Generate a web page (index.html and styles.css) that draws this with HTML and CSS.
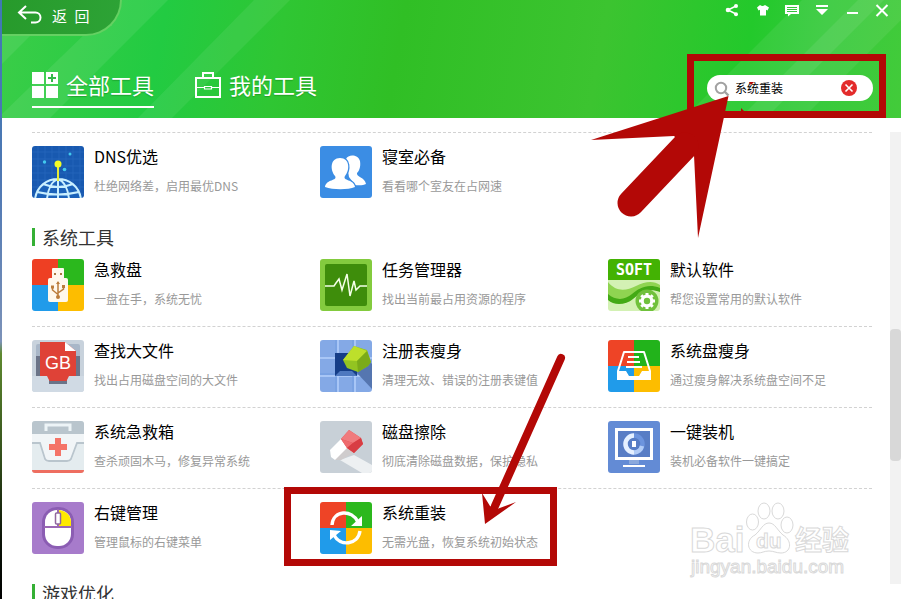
FILE: index.html
```html
<!DOCTYPE html>
<html lang="zh-CN">
<head>
<meta charset="utf-8">
<title>全部工具</title>
<link rel="stylesheet" href="styles.css">
</head>
<body>
<div class="desktop-edge"></div>
<div class="app">
  <header class="header">
    <svg class="streaks" viewBox="0 0 899 118" preserveAspectRatio="none" aria-hidden="true">
      <path d="M118 0H166L48 118H-2V116Z M0 64V30L24 4H60Z" fill="#fff" opacity=".08"/>
      <path d="M252 0H288L170 118H136Z" fill="#fff" opacity=".07"/>
      <path d="M800 0H899V20L801 118H682Z" fill="#fff" opacity=".07"/>
      <path d="M856 0H882L764 118H738Z" fill="#fff" opacity=".08"/>
    </svg>
    <div class="topbar">
      <button class="back" type="button">
        <svg width="26" height="20" viewBox="0 0 26 20" fill="none" stroke="#fff" stroke-width="2"><path d="M9 1L2 7.500l7 6.500M2.500 7.500H18.500a5 5 0 0 1 0 10H14"/></svg>
        <span>返&ensp;回</span>
      </button>
      <div class="controls">
        <button type="button" aria-label="分享"><svg width="14" height="14" viewBox="0 0 14 14"><path d="M11 3L3 7l8 4" fill="none" stroke="#fff" stroke-width="1.500"/><g fill="#fff"><circle cx="11" cy="3" r="2"/><circle cx="3" cy="7" r="2.300"/><circle cx="11" cy="11.200" r="2"/></g></svg></button>
        <button type="button" aria-label="换肤"><svg width="14" height="14" viewBox="0 0 14 14"><path d="M5 2Q7.500 4 10 2L14 4.500 12.500 7.500 11 6.800V12.500H5V6.800L3.500 7.500 2 4.500Z" fill="#fff"/></svg></button>
        <button type="button" aria-label="反馈"><svg width="14" height="14" viewBox="0 0 14 14"><path d="M0 2H14V11H6L3 13.500V11H0Z" fill="#fff"/><path d="M2 4.500H12M2 6.500H12M2 8.500H12" stroke="#35c43b"/></svg></button>
        <button type="button" aria-label="菜单"><svg width="14" height="14" viewBox="0 0 14 14"><path d="M1 2H13V4H1ZM1 6H13L7 12Z" fill="#fff"/></svg></button>
        <button type="button" aria-label="最小化"><svg width="14" height="14" viewBox="0 0 14 14"><path d="M2 9H13V11H2Z" fill="#fff"/></svg></button>
        <button type="button" aria-label="关闭"><svg width="14" height="14" viewBox="0 0 14 14"><path d="M1.500 2L12.500 13M12.500 2L1.500 13" stroke="#fff" stroke-width="2"/></svg></button>
      </div>
    </div>
    <div class="navbar">
      <nav class="tabs">
        <a class="tab active" href="#all">
          <svg width="26" height="26" viewBox="0 0 26 26"><path d="M0 0H12V12H0ZM14 0H26V12H14ZM0 14H12V26H0ZM14 14H26V26H14Z" fill="#fff"/><path d="M20 2V10M16 6H24" stroke="#35b84a" stroke-width="2"/></svg>
          全部工具
        </a>
        <a class="tab" href="#mine">
          <svg width="26" height="26" viewBox="0 0 26 26" fill="none" stroke="#fff" stroke-width="2"><path d="M1 6H25V25H1ZM8 6V1H18V6"/><path d="M1 15.500H10M16 15.500H25M9.500 14.500H16.500V17H9.500Z" stroke-width="1.200"/></svg>
          我的工具
        </a>
      </nav>
      <form class="search">
        <svg width="16" height="16" viewBox="0 0 16 16" fill="none" stroke="#a2a2a2"><circle cx="7" cy="8" r="5.200" stroke-width="2"/><path d="M11 12L14.500 15.500" stroke-width="2.400"/></svg>
        <input type="text" value="系统重装" aria-label="搜索工具">
        <button type="reset" aria-label="清除"><svg width="16" height="16" viewBox="0 0 16 16"><circle cx="8" cy="8" r="8" fill="#e32b2b"/><path d="M4.500 4.500L11.500 11.500M11.500 4.500L4.500 11.500" stroke="#fff" stroke-width="1.600"/></svg></button>
      </form>
    </div>
  </header>

  <div class="body">
    <main class="list">
      <section>
        <div class="row ruled">
          <a class="tool" href="#dns">
            <svg class="icon" viewBox="0 0 52 52">
              <rect width="52" height="52" fill="#1859b0"/>
              <path d="M6 0V52M13 0V52M20 0V52M27 0V52M34 0V52M41 0V52M48 0V52M0 6H52M0 13H52M0 20H52M0 27H52M0 34H52M0 41H52M0 48H52" stroke="#2767bd" stroke-width=".8"/>
              <path d="M3 53C5 40 15 33 26 33S47 40 49 53" fill="#1b62ba"/>
              <g fill="none" stroke="#c9efff" stroke-width="2"><path d="M3 53C5 40 15 33 26 33S47 40 49 53M15 53C16 43 20 35 26 33C32 35 36 43 37 53M26 33V52M11 38Q26 44 41 38M5 46Q26 51 47 46" /></g>
              <path d="M26 18V35" stroke="#e6ed36" stroke-width="2"/><circle cx="26" cy="18" r="3.500" fill="#f3fb25"/>
              <g fill="#42c9ee"><circle cx="12.500" cy="16" r="1.700"/><circle cx="38" cy="8" r="1.500"/><circle cx="32.500" cy="23.500" r="1.800"/></g>
            </svg>
            <span class="info"><b>DNS优选</b><small>杜绝网络差，启用最优DNS</small></span>
          </a>
          <a class="tool" href="#dorm">
            <svg class="icon" viewBox="0 0 52 52">
              <rect width="52" height="52" fill="#3b8de4"/>
              <g fill="#fff"><path d="M26 13C28 8 38 8 40 15C41 21 39 25 37 27C36 31 45 31 46 38C43 40 35 39 35 39L29 31Z"/><path d="M20 12C30 12 30 24 25 30C22 35 34 33 35 41C28 44 13 44 5 41C6 33 18 35 15 30C10 24 10 12 20 12Z" stroke="#3b8de4" stroke-width="2.400" paint-order="stroke"/></g>
            </svg>
            <span class="info"><b>寝室必备</b><small>看看哪个室友在占网速</small></span>
          </a>
        </div>
      </section>

      <section>
        <h2>系统工具</h2>
        <div class="row">
          <a class="tool" href="#rescue-disk">
            <svg class="icon" viewBox="0 0 52 52">
              <path d="M0 0H26V26H0Z" fill="#ee3f23"/><path d="M26 0H52V26H26Z" fill="#2bb81d"/><path d="M0 26H26V52H0Z" fill="#209bea"/><path d="M26 26H52V52H26Z" fill="#fdbd00"/>
              <rect x="20" y="9" width="12" height="12" rx="1" fill="#fff8ec"/><rect x="16" y="19" width="20" height="24" rx="2" fill="#fff8ec"/>
              <path d="M22 14H24V16H22ZM28 14H30V16H28Z" fill="#aa7741"/>
              <g fill="none" stroke="#bb7c3b" stroke-width="1.500"><path d="M26 23V38M20.500 27V31L26 35.500M31.500 27V30L26 34"/></g><circle cx="26" cy="38" r="2" fill="#bb7c3b"/><path d="M24 25L26 22 28 25ZM19 26.500H22V29.500H19ZM30 26H33V29H30Z" fill="#bb7c3b"/>
            </svg>
            <span class="info"><b>急救盘</b><small>一盘在手，系统无忧</small></span>
          </a>
          <a class="tool" href="#tasks">
            <svg class="icon" viewBox="0 0 52 52">
              <rect width="52" height="52" fill="#83cb3e"/><rect x="5" y="5" width="42" height="42" rx="2" fill="#3e8d0b"/>
              <path d="M5 27H14L16 24 19 20 22 31 27 15 30 37 34 22 36 31 40 27H47" fill="none" stroke="#f4ffe8" stroke-width="1.500"/>
            </svg>
            <span class="info"><b>任务管理器</b><small>找出当前最占用资源的程序</small></span>
          </a>
          <a class="tool" href="#defaults">
            <svg class="icon" viewBox="0 0 52 52">
              <rect width="52" height="52" fill="#d3f1b4"/><path d="M0 0H52V21H0Z" fill="#43b203"/>
              <path d="M0 23C8 33 18 32 28 27S46 22 52 26V31C42 26 34 32 26 38S8 43 0 36Z" fill="#8fd451"/><path d="M0 35C8 42 17 41 24 35S40 24 52 29V33C40 28 32 34 25 40S6 47 0 41Z" fill="#43aa15"/>
              <text x="26" y="16" text-anchor="middle" class="soft">SOFT</text>
              <circle cx="39" cy="42" r="11.500" fill="#70c13c"/>
              <circle cx="39" cy="42" r="4.800" fill="none" stroke="#fff" stroke-width="3.200"/><path d="M39 34V37M39 47V50M31 42H34M44 42H47M33.300 36.300L35.500 38.500M42.500 45.500L44.700 47.700M44.700 36.300L42.500 38.500M35.500 45.500L33.300 47.700" stroke="#fff" stroke-width="3"/>
            </svg>
            <span class="info"><b>默认软件</b><small>帮您设置常用的默认软件</small></span>
          </a>
        </div>
        <div class="row ruled">
          <a class="tool" href="#large-files">
            <svg class="icon" viewBox="0 0 52 52">
              <rect width="52" height="52" fill="#c8d2dc"/><rect x="4" y="4" width="44" height="34" rx="2" fill="#a9b7c8"/><path d="M4 16H48V36H35V44H17V36H4Z" fill="#6b7488"/><path d="M0 36H17V44H35V36H52V52H0Z" fill="#d0dae4"/>
              <path d="M8 2H33L44 11V36H37L34 42H18L15 36H8Z" fill="#df4237"/><path d="M33 2L44 11H33Z" fill="#fff"/><path d="M17 41H35V44H17Z" fill="#6b7488"/>
              <text x="26" y="29" text-anchor="middle" class="gb">GB</text>
            </svg>
            <span class="info"><b>查找大文件</b><small>找出占用磁盘空间的大文件</small></span>
          </a>
          <a class="tool" href="#registry">
            <svg class="icon" viewBox="0 0 52 52">
              <rect width="52" height="52" fill="#84a9e6"/><path d="M18 0V52M35 0V52M0 18H15M0 36H52M40 18H52" stroke="#b4d0fb" stroke-width="1.500"/><path d="M16 0V52M33 0V52M0 34H52" stroke="#719ce0"/>
              <path d="M36 32L52 49V24L48 20Z" fill="#5576b0"/><path d="M15 13H37V36H15Z" fill="#153d87"/><path d="M15 36L20 31H32L37 36Z" fill="#4e78bf"/>
              <path d="M23 20L34 6 47 10 51 22 48 26 38 32 27 28Z" fill="#93c421"/><path d="M23 20L34 6 47 11 37 21Z" fill="#bddf2b"/><path d="M37 21L47 11 51 22 48 26 38 32Z" fill="#7bab19"/>
            </svg>
            <span class="info"><b>注册表瘦身</b><small>清理无效、错误的注册表键值</small></span>
          </a>
          <a class="tool" href="#slim">
            <svg class="icon" viewBox="0 0 52 52">
              <path d="M0 0H26V26H0Z" fill="#ee4426"/><path d="M26 0H52V26H26Z" fill="#22b31b"/><path d="M0 26H26V52H0Z" fill="#209bea"/><path d="M26 26H52V52H26Z" fill="#fdbd00"/>
              <path d="M16 12H36L42 31V39H10V31Z" fill="none" stroke="#fff" stroke-width="2" stroke-linejoin="round"/><path d="M9 31H18L21 36H31L34 31H43V40H9Z" fill="#fff"/><path d="M20 17H31M19 22H32M18 27H34" stroke="#fff" stroke-width="2"/>
            </svg>
            <span class="info"><b>系统盘瘦身</b><small>通过瘦身解决系统盘空间不足</small></span>
          </a>
        </div>
        <div class="row ruled">
          <a class="tool" href="#first-aid">
            <svg class="icon" viewBox="0 0 52 52">
              <rect width="52" height="52" fill="#e4ecef"/><path d="M0 0H52V13H0Z" fill="#b9c5cd"/><path d="M14 10V4H38V10" fill="none" stroke="#edf4f7" stroke-width="3"/>
              <path d="M0 13H52V21H46L40 38Q39 41 36 41H16Q13 41 12 38L7 21H0Z" fill="#f1f5f7"/><path d="M0 22H8L13 38Q14 40 17 40H35Q38 40 39 38L45 22H52" fill="none" stroke="#b9c5cd" stroke-width="1.800"/>
              <path d="M23 17H29V23H35V29H29V35H23V29H17V23H23Z" fill="#f47468"/><path d="M0 49H52V52H0Z" fill="#ee6e60"/>
            </svg>
            <span class="info"><b>系统急救箱</b><small>查杀顽固木马，修复异常系统</small></span>
          </a>
          <a class="tool" href="#erase">
            <svg class="icon" viewBox="0 0 52 52">
              <rect width="52" height="52" fill="#c8d0d7"/><path d="M20 39L34 34 52 44V52H42Z" fill="#edf0f2"/>
              <path d="M10 29L21 18 33 31 22 38 15 39 11 36Z" fill="#fff"/><path d="M15 39L27 27 34 32 21 39Z" fill="#cfcccd"/>
              <path d="M21 18L29 9 41 17 43 23 34 32 27 27Z" fill="#e5484c"/><path d="M21 18L29 9 41 17 33 22Z" fill="#f07b7d"/><path d="M21 18L33 22 27 27Z" fill="#ee6a6d"/><path d="M33 22L41 17 43 23 34 32 27 27Z" fill="#d83d43"/>
            </svg>
            <span class="info"><b>磁盘擦除</b><small>彻底清除磁盘数据，保护隐私</small></span>
          </a>
          <a class="tool" href="#install">
            <svg class="icon" viewBox="0 0 52 52">
              <rect width="52" height="52" fill="#638bd5"/><rect x="8.500" y="8.500" width="35" height="29" fill="#587dc5" stroke="#fff" stroke-width="3"/>
              <g fill="none" stroke-width="4.500"><circle cx="26" cy="23" r="8.500" stroke="#6c94de"/><path d="M26 14.500A8.500 8.500 0 0 0 26 31.500" stroke="#e5f0ff"/><path d="M26 31.500A8.500 8.500 0 0 0 34 25" stroke="#b1ccf7"/></g><rect x="24" y="20" width="4" height="6" fill="#fff"/>
              <path d="M21 39H31V43H21Z" fill="#8ba9dd"/><path d="M15 44H37V46H15Z" fill="#fff"/>
            </svg>
            <span class="info"><b>一键装机</b><small>装机必备软件一键搞定</small></span>
          </a>
        </div>
        <div class="row ruled">
          <a class="tool" href="#context-menu">
            <svg class="icon" viewBox="0 0 52 52">
              <rect width="52" height="52" fill="#a77bcb"/><rect x="10" y="5" width="32" height="42" rx="15" fill="#8b5db3"/>
              <rect x="13" y="8" width="26" height="36" rx="12" fill="#fff"/><path d="M26 8A13 12 0 0 1 39 20V25H26Z" fill="#ffe900"/><path d="M12 25H40M26 7V25" stroke="#9b67b4" stroke-width="2"/><rect x="23.500" y="11" width="5" height="11" rx="1" fill="#fff" stroke="#91679e" stroke-width="1.500"/>
            </svg>
            <span class="info"><b>右键管理</b><small>管理鼠标的右键菜单</small></span>
          </a>
          <a class="tool" href="#reinstall">
            <svg class="icon" viewBox="0 0 52 52">
              <path d="M0 0H26V26H0Z" fill="#ee4426"/><path d="M26 0H52V26H26Z" fill="#2bb81d"/><path d="M0 26H26V52H0Z" fill="#209bea"/><path d="M26 26H52V52H26Z" fill="#fdbd00"/>
              <g fill="none" stroke="#fff" stroke-width="3.400"><path d="M12 23C13 8 32 7 38 20"/><path d="M40 29C38 43 20 45 14 33"/></g><path d="M42 14V24H31ZM10 38V28L21 29Z" fill="#fff"/>
            </svg>
            <span class="info"><b>系统重装</b><small>无需光盘，恢复系统初始状态</small></span>
          </a>
        </div>
      </section>

      <section>
        <h2>游戏优化</h2>
      </section>
    </main>
    <div class="scrollbar"><div class="thumb"></div></div>
  </div>
</div>

<svg class="overlay" width="901" height="599" viewBox="0 0 901 599" aria-hidden="true">
  <g class="watermark">
    <text x="690" y="552" class="wm-logo">Bai</text>
    <ellipse cx="752.500" cy="522" rx="6" ry="8"/><ellipse cx="764" cy="511" rx="6" ry="8"/><ellipse cx="778" cy="511" rx="6" ry="8"/><ellipse cx="787" cy="525" rx="6" ry="8"/>
    <path d="M769 523C775 523 777 530 783 535C793 541 791 553 781 553C776 553 774 551 769 551S762 553 758 553C747 553 745 540 755 535C761 530 763 523 769 523Z"/>
    <text x="756" y="548" class="wm-du">du</text>
    <text x="795" y="550" class="wm-cn">经验</text>
    <text x="691" y="573" class="wm-url">jingyan.baidu.com</text>
  </g>
  <g fill="none" stroke="#b30806" stroke-width="7"><rect x="690.500" y="57.500" width="192" height="57"/><rect x="287.500" y="490.500" width="266" height="72"/></g>
  <g fill="#b30806">
    <path d="M728.500 96L591 140 674 136 694 155 698 238Z"/>
    <path d="M631 203L685 146" stroke="#b30806" stroke-width="27" stroke-linecap="round"/>
    <path d="M741 108L744 111H741ZM749 82H754L751 85Z"/>
    <path d="M561 358L495 506" stroke="#b30806" stroke-width="8" stroke-linecap="round"/>
    <path d="M485 524L482 493 490 506 497 509 516 502Z"/>
  </g>
</svg>
</body>
</html>
```
FILE: styles.css
```css
* {
  box-sizing: border-box;
}

body {
  position: relative;
  display: flex;
  height: 100vh;
  margin: 0;
  overflow: hidden;
  background: #fff;
  color: #000;
  font-family: "Noto Sans CJK SC", sans-serif;
}

button {
  padding: 0;
  border: 0;
  background: none;
  font: inherit;
}

a {
  color: inherit;
  text-decoration: none;
}

svg {
  display: block;
  flex: none;
}

.desktop-edge {
  flex: none;
  width: 2px;
  background: linear-gradient(#3f78b4 0%, #4e78b4 30%, #7c92b8 57%, #5f8a30 59%, #37541d 75%, #0c1408 90%, #000 100%);
}

.app {
  display: flex;
  flex: 1;
  flex-direction: column;
  min-width: 0;
}

.header {
  position: relative;
  flex: none;
  background: linear-gradient(100deg, #3bcd48 0%, #22cb42 18%, #2fc633 31%, #30bf25 44%, #3cc430 66%, #23c92b 82%, #36ca3c 90%, #43cb3a 100%);
}

.streaks {
  position: absolute;
  inset: 0;
  width: 100%;
  height: 100%;
}

.topbar,
.navbar {
  position: relative;
  display: flex;
  align-items: flex-start;
  justify-content: space-between;
}

.topbar {
  height: 72px;
}

.back {
  display: flex;
  align-items: center;
  gap: 9px;
  width: 120px;
  height: 36px;
  padding: 0 0 4px 15px;
  border: solid #65d062;
  border-width: 0 2px 2px 0;
  border-bottom-right-radius: 36px;
  background: linear-gradient(100deg, #279a2b, #2da336);
  color: #fff;
  font-size: 15px;
}

.controls {
  display: flex;
  gap: 1px;
  padding: 3px 5px 0 0;
}

.controls button {
  display: flex;
  justify-content: center;
  width: 29px;
}

.navbar {
  padding: 0 28px 10px 30px;
}

.tabs {
  display: flex;
  gap: 41px;
}

.tab {
  display: flex;
  align-items: flex-start;
  gap: 8px;
  height: 36px;
  color: #fff;
  font-size: 22px;
  line-height: 24px;
  text-shadow: 0 1px 1px rgba(0, 80, 0, .3);
}

.active {
  border-bottom: 2px solid #fff;
}

.search {
  display: flex;
  align-items: center;
  gap: 5px;
  width: 166px;
  height: 26px;
  margin-top: 3px;
  padding: 0 16px 0 7px;
  border-radius: 13px;
  background: #fff;
}

.search input {
  flex: 1;
  min-width: 0;
  padding: 0;
  border: 0;
  outline: 0;
  background: none;
  color: #000;
  font: 12px/16px "Noto Sans CJK SC", sans-serif;
}

.body {
  display: flex;
  flex: 1;
  gap: 18px;
  min-height: 0;
  padding-top: 14px;
}

.list {
  flex: 1;
  min-width: 0;
  padding-left: 30px;
  overflow: hidden;
}

.row {
  display: grid;
  grid-template-columns: repeat(3, 1fr);
  gap: 24px;
  padding: 13px 0 15px;
}

.ruled {
  border-top: 1px dashed #d2d2d2;
}

h2 {
  margin: 15px 0 0;
  padding-left: 7px;
  border-left: 3px solid #35b035;
  color: #333;
  font-size: 18px;
  font-weight: 400;
  line-height: 18px;
}

.tool {
  display: flex;
  gap: 10px;
}

.icon {
  width: 52px;
  height: 52px;
  border-radius: 3px;
}

.info {
  display: flex;
  flex-direction: column;
  gap: 12px;
  white-space: nowrap;
}

.info b {
  font-size: 16px;
  font-weight: 400;
  line-height: 20px;
}

.info small {
  color: #999;
  font-size: 12px;
  line-height: 16px;
}

.soft {
  fill: #fff;
  font: bold 15px "DejaVu Sans Mono", monospace;
}

.gb {
  fill: #fff;
  font: 18px "Liberation Sans", sans-serif;
}

.scrollbar {
  width: 11px;
  margin-bottom: 15px;
  padding-top: 197px;
  background: #f2f2f2;
}

.thumb {
  height: 132px;
  border-radius: 4px;
  background: #d8d8d8;
}

.overlay {
  position: absolute;
  top: 0;
  left: 0;
  pointer-events: none;
}

.watermark {
  fill: #fff;
  stroke: #d9d9d9;
  stroke-width: 1;
}

.wm-logo {
  font: bold 35px "Liberation Sans", sans-serif;
}

.wm-du {
  font: bold 21px "Liberation Sans", sans-serif;
}

.wm-cn {
  font: bold 27px "Noto Sans CJK SC", sans-serif;
}

.wm-url {
  font: 19px "Liberation Sans", sans-serif;
}
```
